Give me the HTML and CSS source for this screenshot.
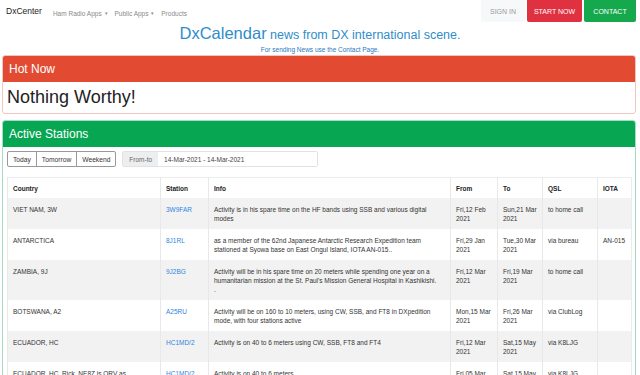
FILE: index.html
```html
<!DOCTYPE html>
<html lang="en">

<head>
    <meta charset="UTF-8">
    <meta name="viewport" content="width=device-width, initial-scale=1.0">
    <title>DxCalendar</title>
    <link rel="stylesheet" href="styles.css">
</head>

<body>
<!-- Top navigation -->
<nav class="navbar">
    <a class="brand" href="#">DxCenter</a>
    <ul class="nav-links">
        <li><a href="#">Ham Radio Apps <span class="caret">&#9662;</span></a></li>
        <li><a href="#">Public Apps <span class="caret">&#9662;</span></a></li>
        <li><a href="#">Products</a></li>
    </ul>
    <div class="nav-actions">
        <a class="nav-btn nav-btn-light" href="#">SIGN IN</a>
        <a class="nav-btn nav-btn-red" href="#">START NOW</a>
        <a class="nav-btn nav-btn-green" href="#">CONTACT</a>
    </div>
</nav>

<header class="page-title">
    <h1><span class="title-big">DxCalendar</span> news from DX international scene.</h1>
    <p class="subtitle">For sending News use the Contact Page.</p>
</header>

<!-- Hot Now -->
<section class="card card-red">
    <div class="card-header">Hot Now</div>
    <div class="card-body">
        <h2 class="hot-text">Nothing Worthy!</h2>
    </div>
</section>

<!-- Active Stations -->
<section class="card card-green">
    <div class="card-header">Active Stations</div>
    <div class="card-body stations-body">
        <div class="filters">
            <div class="btn-group">
                <button class="btn">Today</button>
                <button class="btn">Tomorrow</button>
                <button class="btn">Weekend</button>
            </div>
            <div class="input-group">
                <span class="input-addon">From-to</span>
                <input type="text" class="date-input" value="14-Mar-2021 - 14-Mar-2021">
            </div>
        </div>

        <table class="stations">
            <colgroup>
                <col style="width: 153px">
                <col style="width: 48px">
                <col style="width: 242px">
                <col style="width: 47px">
                <col style="width: 45px">
                <col style="width: 55px">
                <col style="width: 34px">
            </colgroup>
            <thead>
                <tr>
                    <th>Country</th>
                    <th>Station</th>
                    <th>Info</th>
                    <th>From</th>
                    <th>To</th>
                    <th>QSL</th>
                    <th>IOTA</th>
                </tr>
            </thead>
            <tbody>
                <tr>
                    <td>VIET NAM, 3W</td>
                    <td><a href="#">3W9FAR</a></td>
                    <td>Activity is in his spare time on the HF bands using SSB and various digital modes</td>
                    <td>Fri,12 Feb 2021</td>
                    <td>Sun,21 Mar 2021</td>
                    <td>to home call</td>
                    <td></td>
                </tr>
                <tr>
                    <td>ANTARCTICA</td>
                    <td><a href="#">8J1RL</a></td>
                    <td>as a member of the 62nd Japanese Antarctic Research Expedition team stationed at Syowa base on East Ongul Island, IOTA AN-015..</td>
                    <td>Fri,29 Jan 2021</td>
                    <td>Tue,30 Mar 2021</td>
                    <td>via bureau</td>
                    <td>AN-015</td>
                </tr>
                <tr>
                    <td>ZAMBIA, 9J</td>
                    <td><a href="#">9J2BG</a></td>
                    <td>Activity will be in his spare time on 20 meters while spending one year on a humanitarian mission at the St. Paul's Mission General Hospital in Kashikishi.<br>.</td>
                    <td>Fri,12 Mar 2021</td>
                    <td>Fri,19 Mar 2021</td>
                    <td>to home call</td>
                    <td></td>
                </tr>
                <tr>
                    <td>BOTSWANA, A2</td>
                    <td><a href="#">A25RU</a></td>
                    <td>Activity will be on 160 to 10 meters, using CW, SSB, and FT8 in DXpedition mode, with four stations active</td>
                    <td>Mon,15 Mar 2021</td>
                    <td>Fri,26 Mar 2021</td>
                    <td>via ClubLog</td>
                    <td></td>
                </tr>
                <tr>
                    <td>ECUADOR, HC</td>
                    <td><a href="#">HC1MD/2</a></td>
                    <td>Activity is on 40 to 6 meters using CW, SSB, FT8 and FT4</td>
                    <td>Fri,12 Mar 2021</td>
                    <td>Sat,15 May 2021</td>
                    <td>via K8LJG</td>
                    <td></td>
                </tr>
                <tr>
                    <td>ECUADOR, HC, Rick, NE8Z is QRV as HC1MD/2 from Ecuador</td>
                    <td><a href="#">HC1MD/2</a></td>
                    <td>Activity is on 40 to 6 meters</td>
                    <td>Fri,05 Mar 2021</td>
                    <td>Sat,15 May 2021</td>
                    <td>via K8LJG</td>
                    <td></td>
                </tr>
            </tbody>
        </table>
    </div>
</section>
</body>

</html>
```

FILE: styles.css
```css
body {
    margin: 0;
    background-color: #ffffff;
    font-family: "Liberation Sans", Arial, sans-serif;
    color: #333;
}

a {
    text-decoration: none;
}

/* Navbar */
.navbar {
    display: flex;
    align-items: center;
    height: 22px;
    padding-left: 6px;
    padding-right: 4px;
}

.brand {
    font-size: 8.5px;
    color: #222;
    margin-right: 11px;
}

.nav-links {
    display: flex;
    gap: 7px;
    list-style: none;
    margin: 0;
    padding: 0;
}

.nav-links a {
    font-size: 6.5px;
    color: #8a8a8a;
}

.caret {
    font-size: 5px;
    margin-left: 1px;
    vertical-align: 1px;
}

.nav-actions {
    display: flex;
    gap: 2px;
    margin-left: auto;
    height: 100%;
}

.nav-btn {
    display: flex;
    align-items: center;
    justify-content: center;
    height: 22px;
    font-size: 7px;
    color: white;
    border-radius: 0 0 2px 2px;
}

.nav-btn-light {
    width: 44px;
    background-color: #f7f8f9;
    color: #999;
}

.nav-btn-red {
    width: 55px;
    background-color: #df3140;
}

.nav-btn-green {
    width: 52px;
    background-color: #16a84c;
}

/* Title */
.page-title {
    text-align: center;
    color: #2f8dca;
}

.page-title h1 {
    margin: 0;
    padding-top: 2px;
    font-size: 12.5px;
    font-weight: normal;
    line-height: 18px;
}

.title-big {
    font-size: 16.5px;
}

.subtitle {
    margin: 2px 0 0;
    font-size: 6.5px;
    color: #2a78bd;
    line-height: 8px;
}

/* Cards */
.card {
    margin: 0 4px 6px 2px;
    border-radius: 3px;
    border: 1px solid;
    overflow: hidden;
}

.card-red {
    margin-top: 1px;
    border-color: #f1c6be;
}

.card-green {
    border-color: #a8dcc0;
}

.card-header {
    height: 26px;
    line-height: 26px;
    padding-left: 6px;
    font-size: 12px;
    color: white;
}

.card-red .card-header {
    background-color: #e24b32;
}

.card-green .card-header {
    background-color: #07a653;
}

.card-body {
    padding: 0 4px;
}

.hot-text {
    margin: 0;
    height: 31px;
    line-height: 31px;
    font-size: 18px;
    font-weight: normal;
    color: #222;
}

.stations-body {
    padding-top: 4px;
}

/* Filters */
.filters {
    display: flex;
    gap: 6px;
    margin-bottom: 10px;
}

.btn-group {
    display: flex;
}

.btn {
    height: 16px;
    padding: 0 5px;
    font-family: inherit;
    font-size: 6.7px;
    color: #333;
    background: #fff;
    border: 1px solid #999;
    margin-left: -1px;
}

.btn:first-child {
    margin-left: 0;
    border-radius: 2px 0 0 2px;
}

.btn:last-child {
    border-radius: 0 2px 2px 0;
}

.input-group {
    display: flex;
    width: 196px;
    height: 16px;
    border: 1px solid #e2e2e2;
    border-radius: 2px;
    box-sizing: border-box;
}

.input-addon {
    display: flex;
    align-items: center;
    padding: 0 6px;
    font-size: 6.5px;
    color: #666;
    background-color: #eceef0;
}

.date-input {
    flex: 1;
    min-width: 0;
    border: none;
    padding: 0 6px;
    font-family: inherit;
    font-size: 6.5px;
    color: #444;
}

/* Table */
.stations {
    width: 624px;
    border-collapse: collapse;
    table-layout: fixed;
    font-size: 6.5px;
    border: 1px solid #ececec;
}

.stations th,
.stations td {
    padding: 6.5px 5px;
    text-align: left;
    vertical-align: top;
    line-height: 9px;
    border-left: 1px solid #e8e8e8;
}

.stations th {
    padding-top: 6px;
    padding-bottom: 5px;
    font-weight: bold;
    color: #222;
}

.stations tbody tr:nth-child(odd) {
    background-color: #f2f2f2;
}

.stations a {
    color: #2f86e0;
}
```
